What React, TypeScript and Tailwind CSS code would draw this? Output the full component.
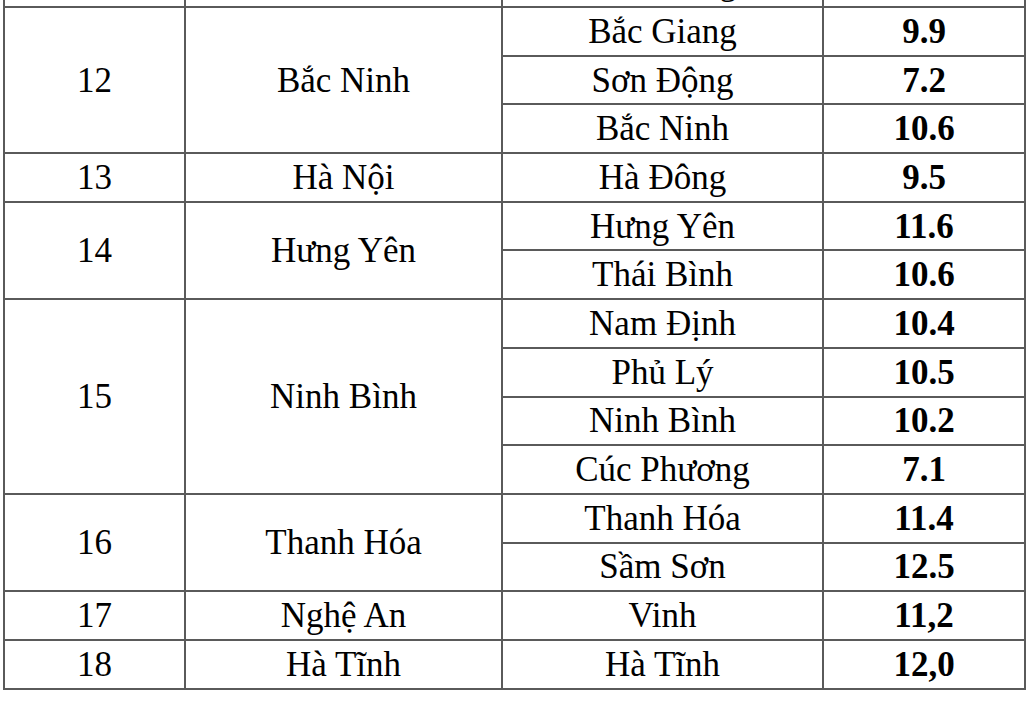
import React from "react";

type Group = {
    stt: string;
    tinh: string;
    tram: { ten: string; gio: string }[];
};

const groups: Group[] = [
    {
        stt: "12",
        tinh: "Bắc Ninh",
        tram: [
            { ten: "Bắc Giang", gio: "9.9" },
            { ten: "Sơn Động", gio: "7.2" },
            { ten: "Bắc Ninh", gio: "10.6" },
        ],
    },
    { stt: "13", tinh: "Hà Nội", tram: [{ ten: "Hà Đông", gio: "9.5" }] },
    {
        stt: "14",
        tinh: "Hưng Yên",
        tram: [
            { ten: "Hưng Yên", gio: "11.6" },
            { ten: "Thái Bình", gio: "10.6" },
        ],
    },
    {
        stt: "15",
        tinh: "Ninh Bình",
        tram: [
            { ten: "Nam Định", gio: "10.4" },
            { ten: "Phủ Lý", gio: "10.5" },
            { ten: "Ninh Bình", gio: "10.2" },
            { ten: "Cúc Phương", gio: "7.1" },
        ],
    },
    {
        stt: "16",
        tinh: "Thanh Hóa",
        tram: [
            { ten: "Thanh Hóa", gio: "11.4" },
            { ten: "Sầm Sơn", gio: "12.5" },
        ],
    },
    { stt: "17", tinh: "Nghệ An", tram: [{ ten: "Vinh", gio: "11,2" }] },
    { stt: "18", tinh: "Hà Tĩnh", tram: [{ ten: "Hà Tĩnh", gio: "12,0" }] },
];

const cell = "border-2 border-[#5a5a5a] text-center align-middle p-0";

const App = () => {
    return (
        <div className="w-[1032px] h-[702px] overflow-hidden bg-white pl-[3px] font-['Liberation_Serif','Times_New_Roman',serif]">
            <table className="mt-[-43px] w-[1021px] table-fixed border-collapse text-[35px] leading-none text-black">
                <colgroup>
                    <col className="w-[181px]" />
                    <col className="w-[317px]" />
                    <col className="w-[321px]" />
                    <col className="w-[202px]" />
                </colgroup>
                <tbody>
                    {/* hang cuoi cua tinh truoc, bi cat o tren */}
                    <tr className="h-[49px]">
                        <td className={cell}></td>
                        <td className={cell}></td>
                        <td className={cell}>Bắc Giang</td>
                        <td className={cell + " font-bold"}></td>
                    </tr>

                    {groups.map((g) =>
                        g.tram.map((t, i) => (
                            <tr key={g.stt + t.ten} className="h-[48.7px]">
                                {i === 0 && (
                                    <>
                                        <td className={cell} rowSpan={g.tram.length}>
                                            {g.stt}
                                        </td>
                                        <td className={cell} rowSpan={g.tram.length}>
                                            {g.tinh}
                                        </td>
                                    </>
                                )}
                                <td className={cell}>{t.ten}</td>
                                <td className={cell + " font-bold"}>{t.gio}</td>
                            </tr>
                        ))
                    )}
                </tbody>
            </table>
        </div>
    );
};

export default App;
